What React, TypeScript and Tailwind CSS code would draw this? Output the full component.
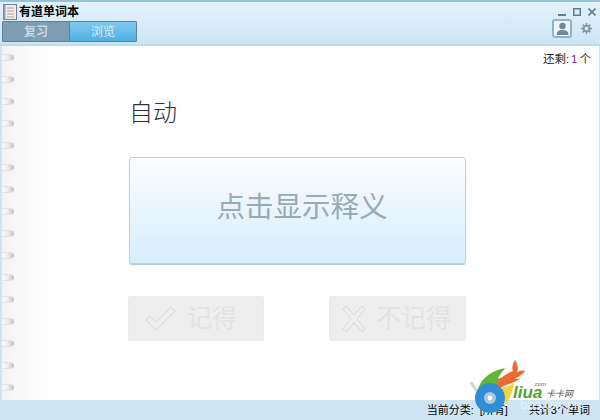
const cjk = "font-['Liberation_Sans','Noto_Sans_CJK_SC',sans-serif]";

const ringRows = Array.from({ length: 16 }, (_, i) => i);

const App = () => {
    return (
        <div className={`relative w-[600px] h-[420px] flex flex-col overflow-hidden bg-white ${cjk}`}>
            {/* Header */}
            <div className="h-[46px] shrink-0 flex flex-col border-t-2 border-[#8fc3e0] border-b-2 border-b-[#bcdcef] bg-gradient-to-b from-[#e3f2fb] to-[#cde5f5]">
                <div className="h-[19px] flex items-center pl-[3px] pr-[4px]">
                    <svg width="14" height="16" viewBox="0 0 14 16" className="shrink-0">
                        <rect x="0.5" y="0.5" width="13" height="15" fill="#f4efe6" stroke="#6d7fa0" />
                        <rect x="0.5" y="0.5" width="2" height="15" fill="#8c9cc0" />
                        <path d="M4 4h7M4 7h7M4 10h7M4 13h7" stroke="#a9a294" strokeWidth="1" />
                    </svg>
                    <span className="ml-[2px] text-[12px] leading-[14px] font-bold text-black">有道单词本</span>
                    <div className="ml-auto flex items-center gap-[7px]">
                        <svg width="8" height="8" viewBox="0 0 8 8"><rect x="0" y="6" width="8" height="2" fill="#5f7f94" /></svg>
                        <svg width="8" height="8" viewBox="0 0 8 8"><rect x="0.75" y="0.75" width="6.5" height="6.5" fill="none" stroke="#5f7f94" strokeWidth="1.5" /></svg>
                        <svg width="8" height="8" viewBox="0 0 8 8"><path d="M0.5 0.5L7.5 7.5M7.5 0.5L0.5 7.5" stroke="#5f7f94" strokeWidth="1.6" /></svg>
                    </div>
                </div>
                <div className="flex-1 flex items-start pl-[2px] pr-[8px]">
                    <div className="flex h-[21px] w-[135px] border border-[#5f8197] rounded-[1px]">
                        <div className="w-[67px] flex items-center justify-center bg-[#7d9db2] text-[12px] font-bold text-[#c9d8e2] border-r border-[#5f8197]">复习</div>
                        <div className="flex-1 flex items-center justify-center bg-gradient-to-b from-[#7fcaf0] to-[#4fb0e4] text-[12px] text-[#d8eef9]">浏览</div>
                    </div>
                    <div className="ml-auto flex items-center gap-[9px] -mt-[2px]">
                        <div className="w-[20px] h-[19px] flex items-center justify-center rounded-[3px] border-2 border-[#8db4cf] bg-[#eef6fb]">
                            <svg width="13" height="13" viewBox="0 0 12 12">
                                <circle cx="6" cy="3.6" r="3" fill="#6f8a9c" />
                                <path d="M0.5 12c0-3.4 2.4-4.6 5.5-4.6s5.5 1.2 5.5 4.6z" fill="#6f8a9c" />
                            </svg>
                        </div>
                        <svg width="11" height="11" viewBox="0 0 11 11">
                            <circle cx="5.5" cy="5.5" r="2.9" fill="none" stroke="#7d97a8" strokeWidth="1.9" />
                            <path d="M5.5 0v2M5.5 9v2M0 5.5h2M9 5.5h2M1.6 1.6l1.4 1.4M8 8l1.4 1.4M9.4 1.6L8 3M3 8L1.6 9.4" stroke="#7d97a8" strokeWidth="1.5" />
                        </svg>
                    </div>
                </div>
            </div>

            {/* Body */}
            <div className="flex-1 flex min-h-0 border-l-2 border-r border-[#cde5f5] border-l-[#cde5f5]">
                <div className="w-[52px] shrink-0 pt-[8px] flex flex-col gap-[15px] bg-gradient-to-r from-[#f4f4f4] to-white">
                    {ringRows.map((row) => (
                        <div key={row} className="w-[12px] h-[7px] shrink-0 rounded-r-full bg-gradient-to-r from-[#fbfbfb] via-[#eeeeee] to-[#bcbcbc] border-y border-[#e4e4e4]" />
                    ))}
                </div>
                <div className="flex-1 flex flex-col pl-[75px] pr-[8px]">
                    <div className="h-[14px] mt-[6px] self-end flex items-center text-[11.5px] leading-[14px] text-[#222222]">
                        还剩:<span className="text-[#7a2c80] mx-[2px]">1</span>个
                    </div>
                    <div className="mt-[33px] text-[24px] leading-[28px] font-light text-[#2b323c]">自动</div>
                    <div className="mt-[30px] w-[337px] h-[107px] flex items-center justify-center pl-[9px] pb-[6px] rounded-[3px] border border-[#a8d8f6] bg-gradient-to-b from-[#fbfcfd] to-[#d6eefb] shadow-[0_1px_1px_#b5c6d0] text-[28.5px] text-[#95acb8]">
                        点击显示释义
                    </div>
                    <div className="mt-[32px] -ml-[1px] w-[338px] flex justify-between">
                        <div className="w-[136px] h-[45px] flex items-center pl-[15px] gap-[11px] rounded-[2px] border border-[#ebebeb] bg-[#eeeeee] text-[25px] text-[#e2e2e2]">
                            <svg width="32" height="26" viewBox="0 0 32 26" className="shrink-0">
                                <path d="M2 14l4-4 6 6L27 1l4 4-19 19z" fill="#eeeeee" stroke="#dedede" strokeWidth="1.2" />
                            </svg>
                            记得
                        </div>
                        <div className="w-[137px] h-[45px] flex items-center pl-[12px] gap-[10px] rounded-[2px] border border-[#ebebeb] bg-[#eeeeee] text-[25px] text-[#e2e2e2]">
                            <svg width="24" height="28" viewBox="0 0 24 28" className="shrink-0">
                                <path d="M4 1l8 9 8-9 3 3-8 10 8 10-3 3-8-9-8 9-3-3 8-10L1 4z" fill="#eeeeee" stroke="#dedede" strokeWidth="1.2" />
                            </svg>
                            不记得
                        </div>
                    </div>
                </div>
            </div>

            {/* Status bar */}
            <div className="h-[20px] shrink-0 flex items-center justify-end pr-[10px] bg-[#cde5f5] text-[11px] leading-[13px] text-black">
                <span>当前分类:</span>
                <span className="ml-[6px]">[所有]</span>
                <span className="ml-[21px]">共计3个单词</span>
            </div>

            {/* Site watermark */}
            <div className="absolute left-[468px] top-[358px] w-[120px] h-[58px]">
                <svg width="120" height="58" viewBox="0 0 120 58" className="absolute inset-0">
                    <path d="M3 24c3 7 8 11 13 14" stroke="#d4d4d4" strokeWidth="3" fill="none" />
                    <path d="M9 37C10 23 21 13 37 10c-3 5-6 7-7 11 2-1 4-2 7-2-7 5-15 10-19 20z" fill="#5fb636" />
                    <path d="M23 37C26 24 35 17 45 13c-2-4 1-9 2-11 2 3 4 8 2 12 3-1 6-2 8-1-3 4-7 6-10 8 2 0 4 0 7-1-9 6-22 7-31 17z" fill="#ef6a2e" />
                    <path d="M33 30c5-1 9-2 13-5-1 7-3 14-8 21-1-6-2-11-5-16z" fill="#f4d23c" />
                    <circle cx="22" cy="40" r="15" fill="#2f8fd6" />
                    <circle cx="22" cy="40" r="6" fill="#a9c6dc" />
                    <circle cx="22" cy="40" r="2.4" fill="#ffffff" />
                </svg>
                <span className="absolute left-[45px] top-[29px] text-[17px] leading-[12px] italic font-bold text-[#4fa52a] font-['Liberation_Sans',sans-serif]">liua</span>
                <span className="absolute left-[65px] top-[23px] text-[6px] leading-[6px] italic text-[#666666]">.com</span>
                <span className="absolute left-[78px] top-[31px] text-[9px] leading-[10px] whitespace-nowrap italic text-[#555555]">卡卡网</span>
                <span className="absolute left-[52px] top-[42px] text-[13px] leading-[10px] whitespace-nowrap text-[#e6f1f8] font-['Liberation_Sans',sans-serif]">bbs.0xy.cn</span>
            </div>
        </div>
    );
};

export default App;
